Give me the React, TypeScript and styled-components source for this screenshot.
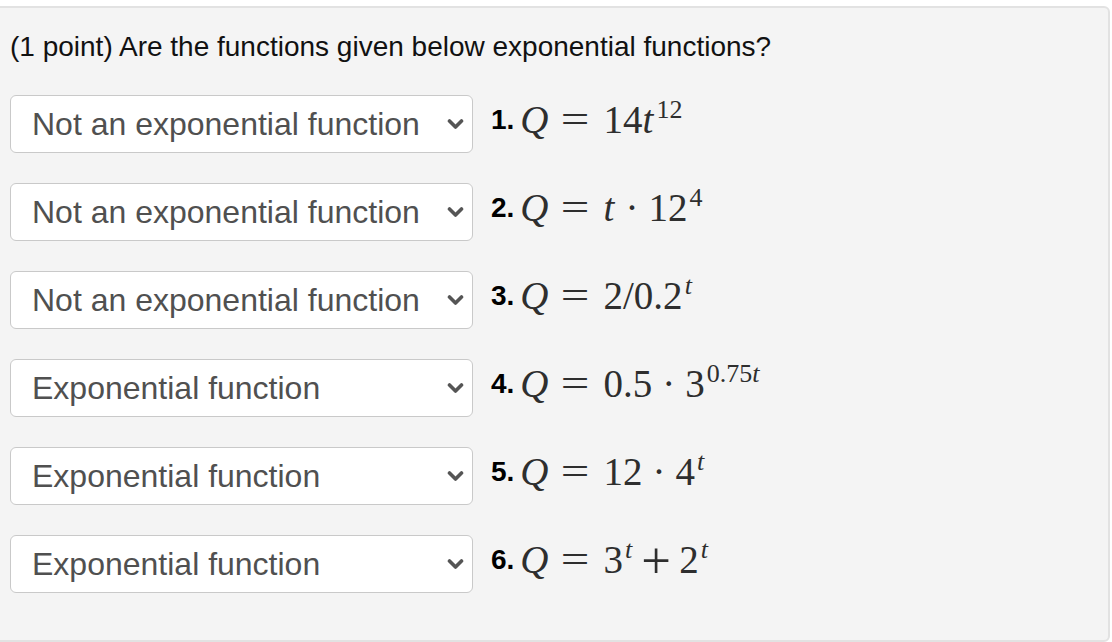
import React from "react";
import styled, { createGlobalStyle } from "styled-components";

const GlobalStyle = createGlobalStyle`
  html, body {
    margin: 0;
    padding: 0;
    background: #ffffff;
    overflow: hidden;
  }

  body {
    font-family: "Liberation Sans", Arial, sans-serif;
  }
`;

const Page = styled.div`
  height: 642px;
  padding-top: 6px;
  box-sizing: border-box;
`;

const Panel = styled.div`
  height: 636px;
  box-sizing: border-box;
  margin: 0 2px 0 -10px;
  padding: 23px 0 0 18px;
  background: #f4f4f4;
  border: 2px solid #e2e2e2;
  border-radius: 6px;
`;

const Prompt = styled.div`
  font-size: 28px;
  line-height: 32px;
  color: #111111;
`;

const List = styled.div`
  display: flex;
  flex-direction: column;
  gap: 30px;
  margin-top: 32px;
`;

const Row = styled.div`
  display: flex;
  align-items: center;
  height: 58px;
`;

const SelectWrap = styled.div`
  position: relative;
  width: 463px;
  height: 58px;
  flex-shrink: 0;
`;

const Select = styled.select`
  appearance: none;
  -webkit-appearance: none;
  width: 100%;
  height: 100%;
  box-sizing: border-box;
  padding: 0 0 0 21px;
  margin: 0;
  background: #ffffff;
  border: 1.5px solid #c9c9c9;
  border-radius: 6px;
  font-family: "Liberation Sans", Arial, sans-serif;
  font-size: 32px;
  color: #505050;
  outline: none;
`;

const Chevron = styled.svg`
  position: absolute;
  right: 9px;
  top: 23px;
  width: 17px;
  height: 12px;
  fill: none;
  stroke: #555555;
  stroke-width: 3.6;
  stroke-linecap: round;
  stroke-linejoin: round;
  pointer-events: none;
`;

const Label = styled.span`
  margin-left: 18px;
  margin-bottom: 8px;
  font-size: 28px;
  font-weight: 700;
  color: #000000;
`;

const MathExpr = styled.span`
  margin-left: 6px;
  margin-bottom: 10px;
  font-family: "Liberation Serif", "Times New Roman", serif;
  font-size: 39px;
  line-height: 1;
  color: #2e2e2e;
  white-space: nowrap;
`;

const V = styled.i`
  font-style: italic;
  padding-right: 1px;
`;

const Rel = styled.span`
  display: inline-block;
  margin: 0 18px 0 14px;
  transform: scaleX(1.3);
`;

const Bin = styled.span<{ $wide?: boolean }>`
  display: inline-block;
  margin: 0 ${({ $wide }) => ($wide ? "12px" : "10px")};
  transform: ${({ $wide }) => ($wide ? "scale(1.35)" : "none")};
`;

const Sup = styled.sup`
  font-size: 26px;
  vertical-align: 15px;
  line-height: 0;
  margin-left: 2px;
`;

type Question = {
  answer: string;
  expr: React.ReactNode;
};

const OPTIONS = ["?", "Exponential function", "Not an exponential function"];

const questions: Question[] = [
  {
    answer: "Not an exponential function",
    expr: (
      <>
        14<V>t</V>
        <Sup>12</Sup>
      </>
    ),
  },
  {
    answer: "Not an exponential function",
    expr: (
      <>
        <V>t</V>
        <Bin>·</Bin>12<Sup>4</Sup>
      </>
    ),
  },
  {
    answer: "Not an exponential function",
    expr: (
      <>
        2/0.2
        <Sup>
          <V>t</V>
        </Sup>
      </>
    ),
  },
  {
    answer: "Exponential function",
    expr: (
      <>
        0.5<Bin>·</Bin>3
        <Sup>
          0.75<V>t</V>
        </Sup>
      </>
    ),
  },
  {
    answer: "Exponential function",
    expr: (
      <>
        12<Bin>·</Bin>4
        <Sup>
          <V>t</V>
        </Sup>
      </>
    ),
  },
  {
    answer: "Exponential function",
    expr: (
      <>
        3
        <Sup>
          <V>t</V>
        </Sup>
        <Bin $wide>+</Bin>2
        <Sup>
          <V>t</V>
        </Sup>
      </>
    ),
  },
];

const App = () => {
  return (
    <>
      <GlobalStyle />
      <Page>
        <Panel>
          <Prompt>(1 point) Are the functions given below exponential functions?</Prompt>
          <List>
            {questions.map((q, i) => (
              <Row key={i}>
                <SelectWrap>
                  <Select defaultValue={q.answer}>
                    {OPTIONS.map((o) => (
                      <option key={o} value={o}>
                        {o}
                      </option>
                    ))}
                  </Select>
                  <Chevron viewBox="0 0 17 12" aria-hidden="true">
                    <path d="M2.5 3 L8.5 9 L14.5 3" />
                  </Chevron>
                </SelectWrap>
                <Label>{i + 1}.</Label>
                <MathExpr>
                  <V>Q</V>
                  <Rel>=</Rel>
                  {q.expr}
                </MathExpr>
              </Row>
            ))}
          </List>
        </Panel>
      </Page>
    </>
  );
};

export default App;
